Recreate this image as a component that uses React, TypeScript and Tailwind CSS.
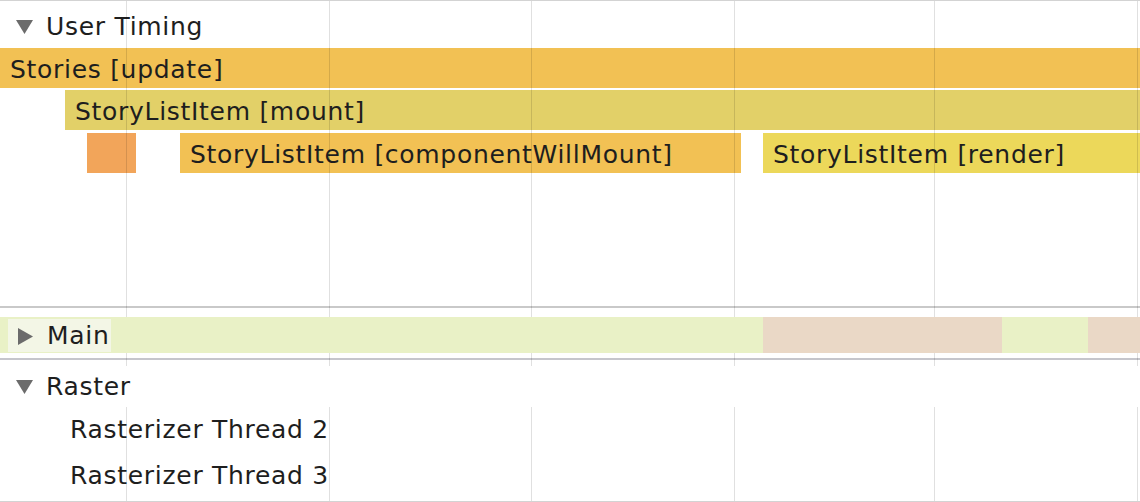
import React from 'react'

const gridXs = [126, 329, 531, 734, 934, 1137]

function Caret({ open }: { open: boolean }) {
  return (
    <svg width="17" height="17" viewBox="0 0 17 17" className="shrink-0">
      {open ? <path d="M0 2 L17 2 L8.5 16 Z" fill="#6b6b6b" /> : <path d="M1 0 L16 8.5 L1 17 Z" fill="#6b6b6b" />}
    </svg>
  )
}

function Bar({ left, width, color, label }: { left: number; width: number; color: string; label?: string }) {
  return (
    <div
      className={`absolute top-0 bottom-0 flex items-center overflow-hidden whitespace-nowrap pl-[10px] pt-[3px] ${color}`}
      style={{ left, width }}
    >
      {label}
    </div>
  )
}

export default function App() {
  return (
    <div className="relative w-[1140px] h-[502px] overflow-hidden bg-white text-[25px] tracking-[0.7px] text-[#1e1e1e] border-t border-[#d3d3d3] border-b font-['DejaVu_Sans',sans-serif]">
      {/* grid lines */}
      {gridXs.map(x => (
        <div key={x} className="absolute top-0 bottom-0 w-px bg-black/[0.12] z-10" style={{ left: x }} />
      ))}

      {/* User Timing */}
      <section className="h-[305px]">
        <div className="h-[47px] flex items-center gap-[13px] pl-[16px] pt-[4px]">
          <Caret open />
          <span>User Timing</span>
        </div>
        <div className="relative h-[40px]">
          <Bar left={0} width={1140} color="bg-[#f2c154]" label="Stories [update]" />
        </div>
        <div className="relative h-[40px] mt-[2px]">
          <Bar left={65} width={1075} color="bg-[#e2d068]" label="StoryListItem [mount]" />
        </div>
        <div className="relative h-[40px] mt-[3px]">
          <Bar left={87} width={49} color="bg-[#f2a55a]" />
          <Bar left={180} width={561} color="bg-[#f2c154]" label="StoryListItem [componentWillMount]" />
          <Bar left={763} width={377} color="bg-[#ecd85a]" label="StoryListItem [render]" />
        </div>
      </section>

      <div className="h-[2px] bg-[#c9c9c9]" />

      {/* Main */}
      <section className="h-[50px] pt-[9px]">
        <div className="relative z-20 h-[36px] flex">
          <div className="w-[763px] bg-[#e9f1c6]" />
          <div className="w-[239px] bg-[#ead8c6]" />
          <div className="w-[86px] bg-[#e9f1c6]" />
          <div className="flex-1 bg-[#ead8c6]" />
          <div className="absolute left-[8px] top-[2px] bottom-[1px] w-[103px] bg-[#f3f6e6] flex items-center gap-[13px] pl-[9px] pt-[1px]">
            <Caret open={false} />
            <span>Main</span>
          </div>
        </div>
      </section>

      <div className="h-[2px] bg-[#c6c6cc]" />

      {/* Raster */}
      <section>
        <div className="h-[6px]" />
        <div className="relative z-20 h-[41px] bg-white flex items-center gap-[13px] pl-[16px]">
          <Caret open />
          <span>Raster</span>
        </div>
        <div className="h-[46px] flex items-center pl-[70px]">Rasterizer Thread 2</div>
        <div className="h-[46px] flex items-center pl-[70px]">Rasterizer Thread 3</div>
      </section>
    </div>
  )
}
